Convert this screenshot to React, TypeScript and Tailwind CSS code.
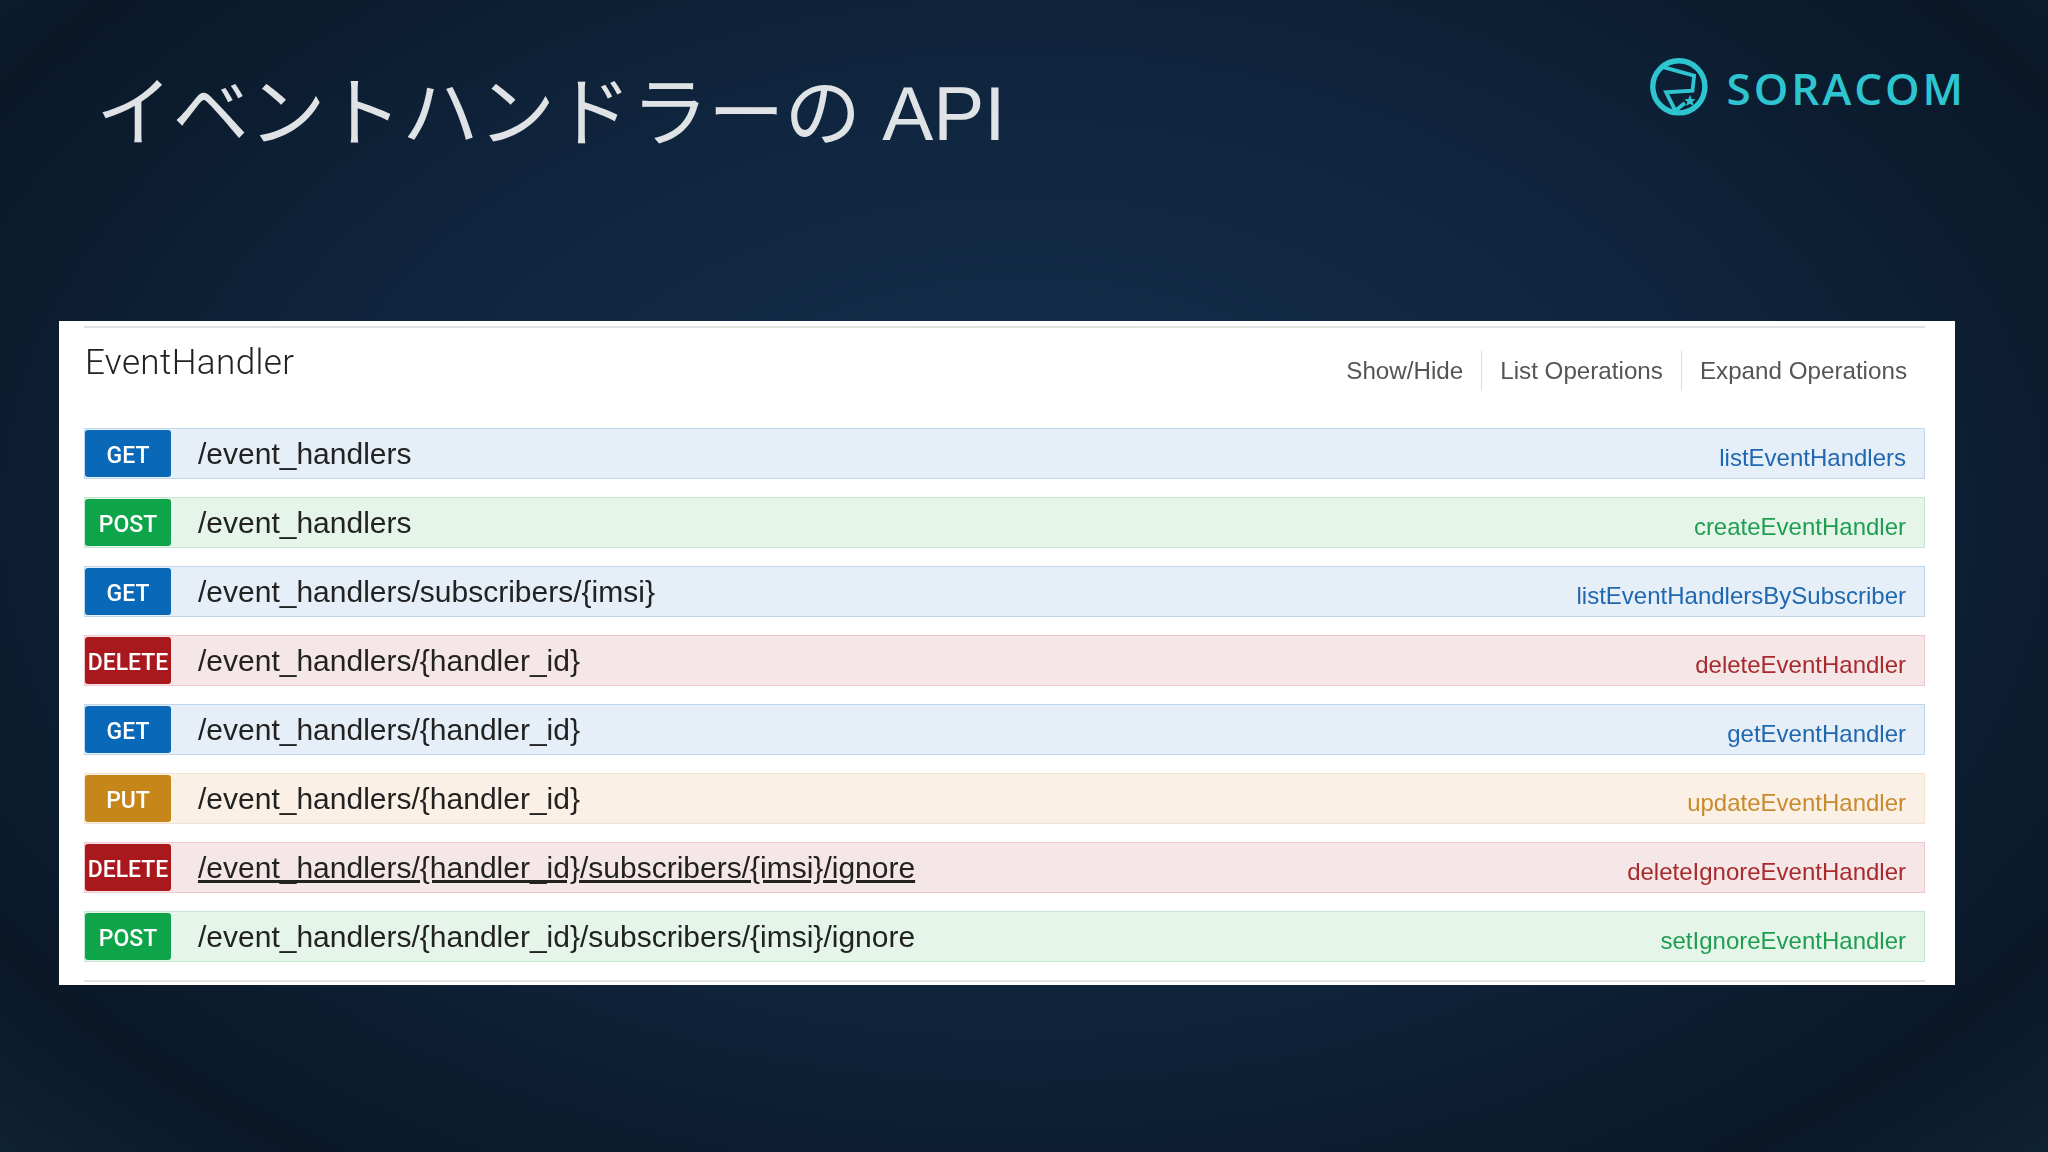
const rows = [
  { m: "GET", p: "/event_handlers", n: "listEventHandlers" },
  { m: "POST", p: "/event_handlers", n: "createEventHandler" },
  { m: "GET", p: "/event_handlers/subscribers/{imsi}", n: "listEventHandlersBySubscriber" },
  { m: "DELETE", p: "/event_handlers/{handler_id}", n: "deleteEventHandler" },
  { m: "GET", p: "/event_handlers/{handler_id}", n: "getEventHandler" },
  { m: "PUT", p: "/event_handlers/{handler_id}", n: "updateEventHandler" },
  { m: "DELETE", p: "/event_handlers/{handler_id}/subscribers/{imsi}/ignore", n: "deleteIgnoreEventHandler", u: true },
  { m: "POST", p: "/event_handlers/{handler_id}/subscribers/{imsi}/ignore", n: "setIgnoreEventHandler" },
];

const styles: Record<string, { row: string; badge: string; text: string }> = {
  GET: { row: "bg-[#e6eef7] border-[#c0d6ea]", badge: "bg-[#0a68b8]", text: "text-[#1f68b0]" },
  POST: { row: "bg-[#e5f5ea] border-[#c3e6d0]", badge: "bg-[#0ea54a]", text: "text-[#1f9e50]" },
  DELETE: { row: "bg-[#f5e6e8] border-[#efc9cd]", badge: "bg-[#a8181c]", text: "text-[#a82a2c]" },
  PUT: { row: "bg-[#fbf0e6] border-[#f3e3d0]", badge: "bg-[#c6861a]", text: "text-[#c78a2c]" },
};

function Logo() {
  return (
    <div className="flex items-center gap-[17px]">
      <svg width="62" height="62" viewBox="140 78 195 195" fill="none">
        <circle cx="237" cy="175" r="82" stroke="#2ec5d0" strokeWidth="17" />
        <path d="M185 112 L285 140 L280 187 L197 192 L226 250 L256 226" stroke="#2ec5d0" strokeWidth="12" strokeLinejoin="miter" />
        <path d="M272 200 L277 213 L290 214 L280 222 L284 235 L272 228 L260 235 L264 222 L254 214 L267 213 Z" fill="#2ec5d0" />
      </svg>
      <span className="font-['Open_Sans',sans-serif] font-semibold text-[#2ec5d0] text-[44px] leading-none tracking-[2.9px] mt-[2px]">SORACOM</span>
    </div>
  );
}

export default function App() {
  return (
    <div className="w-[2048px] h-[1152px] overflow-hidden flex flex-col bg-[radial-gradient(ellipse_70%_80%_at_50%_45%,#14304c_0%,#102640_45%,#0a1828_85%,#0f2233_100%)]">
      <header className="h-[321px] shrink-0 flex items-start justify-between pl-[96px] pr-[82px]">
        <h1 className="mt-[66px] text-[76.5px] leading-[96px] font-normal text-[#dfe3e6] font-['Liberation_Sans','Noto_Sans_CJK_JP',sans-serif]">イベントハンドラーの API</h1>
        <div className="mt-[56px]"><Logo /></div>
      </header>
      <main className="ml-[59px] w-[1896px] h-[664px] bg-white pl-[25px] pr-[30px] pt-[5px] flex flex-col font-['Liberation_Sans',sans-serif] blur-[0.4px]">
        <div className="border-t-2 border-[#e2e2e2] h-[102px] flex items-start justify-between pt-[12px] pl-[1px] pr-[18px] shrink-0">
          <h2 className="text-[35px] leading-[46px] font-light tracking-[0.4px] text-[#222] font-['Roboto',sans-serif]">EventHandler</h2>
          <nav className="flex items-center mt-[11px] text-[24.2px] leading-[40px] text-[#555]">
            <span className="pr-[18px] border-r border-[#ddd]">Show/Hide</span>
            <span className="px-[18px] border-r border-[#ddd]">List Operations</span>
            <span className="pl-[18px]">Expand Operations</span>
          </nav>
        </div>
        <div className="flex flex-col gap-[18px]">
          {rows.map((r, i) => {
            const s = styles[r.m];
            return (
              <div key={i} className={`h-[51px] border flex items-center pr-[18px] ${s.row}`}>
                <span className={`w-[86px] h-[47px] shrink-0 rounded-[3px] flex items-center justify-center text-white font-medium text-[23px] pt-[5px] font-['Roboto',sans-serif] ${s.badge}`}>{r.m}</span>
                <span className={`ml-[27px] text-[30px] text-[#222] ${r.u ? "underline" : ""}`}>{r.p}</span>
                <span className={`ml-auto pt-[8px] text-[24px] ${s.text}`}>{r.n}</span>
              </div>
            );
          })}
        </div>
        <div className="mt-[18px] border-t-2 border-[#e2e2e2]" />
      </main>
    </div>
  );
}
